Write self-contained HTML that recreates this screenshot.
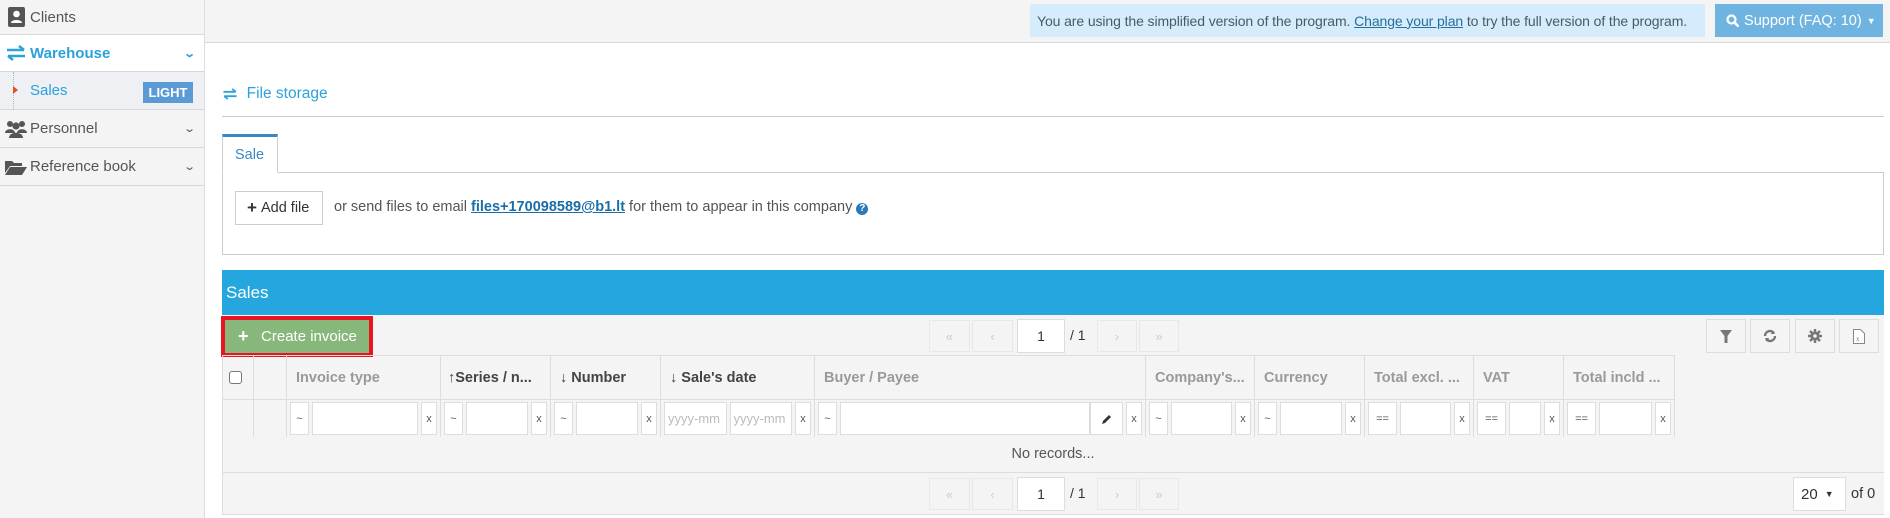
<!DOCTYPE html>
<html><head><meta charset="utf-8">
<style>
*{box-sizing:border-box;margin:0;padding:0}
body{width:1890px;height:518px;overflow:hidden;background:#fff;font-family:"Liberation Sans",sans-serif;font-size:15px;color:#555;position:relative}
.a{position:absolute}
#side{left:0;top:0;width:205px;height:518px;background:#f4f4f4;border-right:1px solid #ddd}
.si{position:absolute;left:0;width:204px;border-bottom:1px solid #d8d8d8;display:flex;align-items:center;padding-left:30px;font-size:15px;color:#555}
.si .ic{position:absolute;left:5px}
.chev{position:absolute;right:10px;font-size:11px;color:#555;transform:scaleX(1.4)}
.tb{background:#f4f4f4;border:1px solid #ddd;display:flex;align-items:center;justify-content:center;color:#888}
.hc{position:absolute;top:355px;height:45px;border-right:1px solid #ddd;display:flex;align-items:center;padding-left:9px;font-weight:bold;font-size:14.5px;color:#999;white-space:nowrap}
.hc.d{color:#444}
.fc{position:absolute;top:400px;height:37px;border-right:1px solid #ddd;display:flex;align-items:center;gap:3px;padding:0 3px}
.fb{height:33px;border:1px solid #ddd;background:#fff;font-size:11px;color:#555;display:flex;align-items:center;justify-content:center;flex:none}
.fi{flex:1;height:33px;border:1px solid #ddd;background:#fff;font-size:13px;color:#bbb;padding-left:3px;display:flex;align-items:center;overflow:hidden;white-space:nowrap}
.pg{position:absolute;height:32px;border:1px solid #e8e8e8;background:#f4f4f4;color:#ccc;font-size:13px;display:flex;align-items:center;justify-content:center}
</style></head><body>

<div id="side" class="a">
  <div class="si" style="top:0;height:35px">
    <svg class="ic" width="18" height="20" viewBox="0 0 18 20" style="left:8px"><rect x="0" y="0" width="17" height="20" rx="2" fill="#555"/><circle cx="8.5" cy="7" r="3.3" fill="#fff"/><path d="M3 16c0-4 11-4 11 0z" fill="#fff"/></svg>
    <span>Clients</span></div>
  <div class="si" style="top:35px;height:37px;background:#fff;color:#2aa2dc;font-weight:bold">
    <svg class="ic" width="22" height="16" viewBox="0 0 22 16"><path d="M2 5h17M14 1l5 4M20 11H3M8 15l-5-4" stroke="#2aa2dc" stroke-width="2.5" fill="none"/></svg>
    <span>Warehouse</span><span class="chev" style="color:#2aa2dc">&#8964;</span></div>
  <div class="si" style="top:72px;height:38px;background:#eef0f4;color:#2aa2dc">
    <div class="a" style="left:13px;top:0;height:38px;border-left:1px dotted #9bc"></div>
    <div class="a" style="left:13px;top:14px;width:0;height:0;border-left:5px solid #e0502a;border-top:4px solid transparent;border-bottom:4px solid transparent"></div>
    <span>Sales</span>
    <span class="a" style="left:143px;top:10px;width:50px;height:21px;background:#5b9bd5;color:#fff;font-weight:bold;font-size:13px;display:flex;align-items:center;justify-content:center">LIGHT</span></div>
  <div class="si" style="top:110px;height:38px">
    <svg class="ic" width="22" height="18" viewBox="0 0 22 18"><circle cx="5" cy="4" r="3" fill="#555"/><circle cx="17" cy="4" r="3" fill="#555"/><circle cx="11" cy="6" r="3.6" fill="#555"/><path d="M0 13c0-5 10-5 10 0zM12 13c0-5 10-5 10 0z" fill="#555"/><path d="M4 18c0-7 14-7 14 0z" fill="#555"/></svg>
    <span>Personnel</span><span class="chev">&#8964;</span></div>
  <div class="si" style="top:148px;height:38px">
    <svg class="ic" width="22" height="16" viewBox="0 0 22 16"><path d="M0 2h7l2 2h8v3H5L0 14z" fill="#555"/><path d="M5 8h17l-5 8H0z" fill="#555"/></svg>
    <span>Reference book</span><span class="chev">&#8964;</span></div>
</div>

<div class="a" style="left:205px;top:0;width:1685px;height:43px;background:#f4f4f4;border-bottom:1px solid #d8d8d8"></div>
<div class="a" style="left:1030px;top:4px;width:675px;height:33px;background:#d4ecfb;color:#4a5a66;font-size:14px;letter-spacing:-0.1px;display:flex;align-items:center;padding-left:7px;white-space:nowrap;overflow:hidden">You are using the simplified version of the program.&nbsp;<u style="color:#2a6f9a">Change your plan</u>&nbsp;to try the full version of the program.</div>
<div class="a" style="left:1715px;top:4px;width:168px;height:33px;background:#6fb3e0;color:#fff;font-size:14.5px;display:flex;align-items:center;padding-left:11px;white-space:nowrap">
  <svg width="14" height="14" viewBox="0 0 14 14"><circle cx="5.5" cy="5.5" r="4" stroke="#fff" stroke-width="2.2" fill="none"/><path d="M8.5 8.5l4 4" stroke="#fff" stroke-width="2.6"/></svg>&nbsp;Support (FAQ: 10)<span style="font-size:9px;margin-left:5px">&#9660;</span></div>

<div class="a" style="left:222px;top:85px;color:#2aa2dc;font-size:15.5px;display:flex;align-items:center">
  <svg width="16" height="12" viewBox="0 0 22 16"><path d="M2 5h17M14 1l5 4M20 11H3M8 15l-5-4" stroke="#2aa2dc" stroke-width="2.5" fill="none"/></svg>&nbsp; File storage</div>
<div class="a" style="left:222px;top:116px;width:1662px;height:1px;background:#ccc"></div>

<div class="a" style="left:222px;top:172px;width:1662px;height:83px;border:1px solid #ccc"></div>
<div class="a" style="left:222px;top:134px;width:56px;height:39px;border:1px solid #ccc;border-top:3px solid #3b87c6;border-bottom:1px solid #fff;background:#fff;color:#3b87c6;font-size:14.5px;padding:10px 0 0 12px">Sale</div>
<div class="a" style="left:235px;top:191px;width:88px;height:34px;border:1px solid #ccc;background:#fff;color:#333;font-size:14.5px;display:flex;align-items:center;padding-left:11px"><b style="font-size:17px">+</b>&nbsp;Add file</div>
<div class="a" style="left:334px;top:199px;color:#555;font-size:14.5px;white-space:nowrap">or send files to email <b style="color:#1a6ea8;text-decoration:underline">files+170098589@b1.lt</b> for them to appear in this company <span style="display:inline-block;width:12px;height:12px;border-radius:50%;background:#2b7ab8;color:#fff;font-size:10px;text-align:center;line-height:12px;font-weight:bold">?</span></div>

<div class="a" style="left:222px;top:270px;width:1662px;height:45px;background:#25a6df;color:#fff;font-size:17px;padding:13px 0 0 4px">Sales</div>
<div class="a" style="left:222px;top:315px;width:1662px;height:200px;background:#f4f4f4;border-bottom:1px solid #ddd"></div>
<div class="a" style="left:221px;top:316px;width:152px;height:41px;border:4px solid #e8141f;background:#88b77b;color:#fff;font-size:15px;display:flex;align-items:center;padding-left:13px;white-space:nowrap"><b style="font-size:18px">+</b>&nbsp;&nbsp; Create invoice</div>

<div class="pg" style="left:929px;top:320px;width:41px">&laquo;</div>
<div class="pg" style="left:972px;top:320px;width:41px">&lsaquo;</div>
<div class="pg" style="left:1017px;top:319px;width:48px;height:34px;background:#fff;border-color:#ddd;color:#333;font-size:14px">1</div>
<div class="a" style="left:1070px;top:327px;color:#333;font-size:14px">/ 1</div>
<div class="pg" style="left:1097px;top:320px;width:40px">&rsaquo;</div>
<div class="pg" style="left:1139px;top:320px;width:40px">&raquo;</div>

<div class="a tb" style="left:1706px;top:319px;width:40px;height:34px"><svg width="12" height="13" viewBox="0 0 12 13"><path d="M0 0h12L7.5 6v7h-3V6z" fill="#777"/></svg></div>
<div class="a tb" style="left:1750px;top:319px;width:40px;height:34px"><svg width="14" height="14" viewBox="0 0 14 14"><path d="M2 7a5 5 0 0 1 9-3M12 7a5 5 0 0 1-9 3" stroke="#777" stroke-width="2.4" fill="none"/><path d="M9 1l3 4-4 0zM5 13l-3-4 4 0z" fill="#777"/></svg></div>
<div class="a tb" style="left:1795px;top:319px;width:40px;height:34px"><svg width="14" height="14" viewBox="0 0 14 14"><circle cx="7" cy="7" r="4.5" fill="#777"/><path d="M7 0v14M0 7h14M2 2l10 10M12 2L2 12" stroke="#777" stroke-width="2.5"/><circle cx="7" cy="7" r="1.8" fill="#f4f4f4"/></svg></div>
<div class="a tb" style="left:1839px;top:319px;width:40px;height:34px"><svg width="12" height="15" viewBox="0 0 12 15"><path d="M.5.5h7l4 4v10h-11z" fill="#fff" stroke="#888"/><text x="3" y="12" font-size="7" fill="#777" font-family="Liberation Serif">x</text></svg></div>

<div class="a" style="left:222px;top:355px;width:1453px;height:1px;background:#ddd"></div>
<div class="a" style="left:222px;top:399px;width:1453px;height:1px;background:#ddd"></div>
<div class="a" style="left:222px;top:355px;width:1px;height:160px;background:#ddd"></div>
<div class="hc" style="left:222px;width:32px"><span style="display:inline-block;width:13px;height:13px;border:1.5px solid #777;border-radius:3px;background:#fff;margin-left:-2px"></span></div>
<div class="hc" style="left:254px;width:33px"></div>
<div class="hc" style="left:287px;width:154px">Invoice type</div>
<div class="hc d" style="left:441px;width:110px;padding-left:7px">&#8593;Series / n...</div>
<div class="hc d" style="left:551px;width:110px">&#8595; Number</div>
<div class="hc d" style="left:661px;width:154px">&#8595; Sale's date</div>
<div class="hc" style="left:815px;width:331px">Buyer / Payee</div>
<div class="hc" style="left:1146px;width:109px">Company's...</div>
<div class="hc" style="left:1255px;width:110px">Currency</div>
<div class="hc" style="left:1365px;width:109px">Total excl. ...</div>
<div class="hc" style="left:1474px;width:90px">VAT</div>
<div class="hc" style="left:1564px;width:111px">Total incld ...</div>

<div class="fc" style="left:222px;width:32px"></div>
<div class="fc" style="left:254px;width:33px"></div>
<div class="fc" style="left:287px;width:154px"><div class="fb" style="width:19px">~</div><div class="fi"></div><div class="fb" style="width:16px">x</div></div>
<div class="fc" style="left:441px;width:110px"><div class="fb" style="width:19px">~</div><div class="fi"></div><div class="fb" style="width:16px">x</div></div>
<div class="fc" style="left:551px;width:110px"><div class="fb" style="width:19px">~</div><div class="fi"></div><div class="fb" style="width:16px">x</div></div>
<div class="fc" style="left:661px;width:154px"><div class="fi">yyyy-mm</div><div class="fi">yyyy-mm</div><div class="fb" style="width:16px">x</div></div>
<div class="fc" style="left:815px;width:331px"><div class="fb" style="width:19px">~</div><div class="fi"></div><div class="fb" style="width:33px;margin-left:-3px"><svg width="12" height="12" viewBox="0 0 12 12"><path d="M1 11l1-3 6-6 2 2-6 6z" fill="#333"/></svg></div><div class="fb" style="width:16px">x</div></div>
<div class="fc" style="left:1146px;width:109px"><div class="fb" style="width:19px">~</div><div class="fi"></div><div class="fb" style="width:16px">x</div></div>
<div class="fc" style="left:1255px;width:110px"><div class="fb" style="width:19px">~</div><div class="fi"></div><div class="fb" style="width:16px">x</div></div>
<div class="fc" style="left:1365px;width:109px"><div class="fb" style="width:29px">==</div><div class="fi"></div><div class="fb" style="width:16px">x</div></div>
<div class="fc" style="left:1474px;width:90px"><div class="fb" style="width:29px">==</div><div class="fi"></div><div class="fb" style="width:16px">x</div></div>
<div class="fc" style="left:1564px;width:111px"><div class="fb" style="width:29px">==</div><div class="fi"></div><div class="fb" style="width:16px">x</div></div>

<div class="a" style="left:222px;top:446px;width:1662px;text-align:center;color:#555;font-size:14.5px">No records...</div>
<div class="a" style="left:222px;top:472px;width:1662px;height:1px;background:#ddd"></div>

<div class="pg" style="left:929px;top:478px;width:41px">&laquo;</div>
<div class="pg" style="left:972px;top:478px;width:41px">&lsaquo;</div>
<div class="pg" style="left:1017px;top:477px;width:48px;height:34px;background:#fff;border-color:#ddd;color:#333;font-size:14px">1</div>
<div class="a" style="left:1070px;top:485px;color:#333;font-size:14px">/ 1</div>
<div class="pg" style="left:1097px;top:478px;width:40px">&rsaquo;</div>
<div class="pg" style="left:1139px;top:478px;width:40px">&raquo;</div>
<div class="a" style="left:1793px;top:477px;width:53px;height:34px;background:#fff;border:1px solid #ddd;color:#333;font-size:15px;display:flex;align-items:center;padding-left:7px">20 <span style="font-size:9px;margin-left:7px">&#9660;</span></div>
<div class="a" style="left:1851px;top:486px;color:#333;font-size:14.5px">of 0</div>
</body></html>
